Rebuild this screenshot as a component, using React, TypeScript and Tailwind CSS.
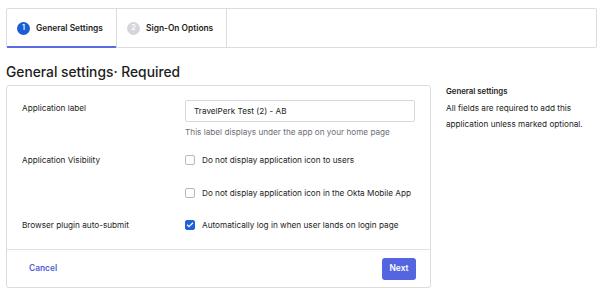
import { Check } from "lucide-react";

const font = { fontFamily: "Inter, 'Noto Sans', sans-serif" };

const Checkbox = ({ checked }: { checked?: boolean }) => (
  <span
    className={`flex h-[10px] w-[10px] shrink-0 items-center justify-center rounded-[2px] border ${
      checked ? "border-[#1f62d6] bg-[#1f62d6]" : "border-[#b7b7bd] bg-white"
    }`}
  >
    {checked && <Check className="h-[8px] w-[8px] text-white" strokeWidth={3.5} />}
  </span>
);

const Step = ({ n, label, active }: { n: number; label: string; active?: boolean }) => (
  <div className="relative flex h-full w-[110px] items-center gap-[6px] border-r border-[#dcdce0] pl-[10px]">
    <span
      className={`flex h-[13px] w-[13px] items-center justify-center rounded-full text-[7px] font-semibold text-white ${
        active ? "bg-[#1a5dd4]" : "bg-[#d6d6da]"
      }`}
    >
      {n}
    </span>
    <span className="text-[8.4px] font-semibold text-[#1d1d21]">{label}</span>
    {active && <span className="absolute -bottom-px left-0 right-0 h-[2px] bg-[#5b6be0]" />}
  </div>
);

export default function App() {
  return (
    <div className="h-[301px] w-[616px] bg-white pl-[6px] pt-[8px] text-[#1d1d21]" style={font}>
      <div className="flex h-[40px] w-[591px] rounded-[2px] border border-[#dcdce0]">
        <Step n={1} label="General Settings" active />
        <Step n={2} label="Sign-On Options" />
      </div>

      <h1 className="mt-[15px] text-[13.8px] font-medium leading-[18px] text-[#1d1d21]">
        General settings· Required
      </h1>

      <div className="mt-[4px] flex items-start gap-[15px]">
        <div className="w-[425px] rounded-[3px] border border-[#dcdce0]">
          <div className="whitespace-nowrap px-[15px] pb-[18px] pt-[14px] text-[8.2px]">
            <div className="flex items-start">
              <div className="mt-[2px] w-[163px] leading-[12px]">Application label</div>
              <div className="flex-1">
                <div className="flex h-[22px] items-center rounded-[2px] border border-[#d8d8dc] px-[8px]">
                  TravelPerk Test (2) - AB
                </div>
                <div className="mt-[4px] leading-[12px] text-[#6e6e78]">
                  This label displays under the app on your home page
                </div>
              </div>
            </div>

            <div className="mt-[16px] flex items-start">
              <div className="w-[163px] leading-[12px]">Application Visibility</div>
              <div className="flex flex-col gap-[21px]">
                <label className="flex h-[12px] items-center gap-[7px]">
                  <Checkbox />
                  Do not display application icon to users
                </label>
                <label className="flex h-[12px] items-center gap-[7px]">
                  <Checkbox />
                  Do not display application icon in the Okta Mobile App
                </label>
              </div>
            </div>

            <div className="mt-[20px] flex items-start">
              <div className="w-[163px] leading-[12px]">Browser plugin auto-submit</div>
              <label className="flex h-[12px] items-center gap-[7px]">
                <Checkbox checked />
                Automatically log in when user lands on login page
              </label>
            </div>
          </div>

          <div className="flex h-[38px] items-center justify-between border-t border-[#e2e2e6] pl-[22px] pr-[14px]">
            <button className="text-[8.4px] font-semibold text-[#4f5ed9]">Cancel</button>
            <button className="h-[22px] w-[34px] rounded-[3px] bg-[#5465e0] text-[8.4px] font-semibold text-white">
              Next
            </button>
          </div>
        </div>

        <div>
          <div className="text-[7.8px] font-semibold leading-[12px]">General settings</div>
          <p className="mt-[3px] text-[8.2px] leading-[16px]">
            All fields are required to add this
            <br />
            application unless marked optional.
          </p>
        </div>
      </div>
    </div>
  );
}
